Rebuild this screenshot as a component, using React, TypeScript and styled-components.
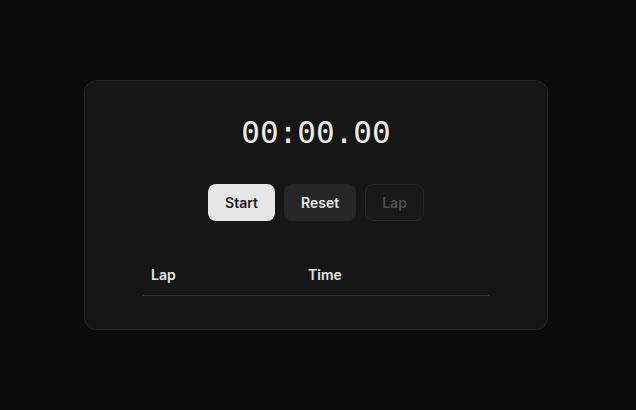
import React from "react";
import styled, { createGlobalStyle } from "styled-components";

const Global = createGlobalStyle`
  html, body { margin: 0; padding: 0; background: #0b0b0b; }
  body { font-family: Inter, "Noto Sans", sans-serif; }
`;

const Page = styled.div`
  box-sizing: border-box;
  min-height: 410px;
  padding-right: 4px;
  display: flex;
  align-items: center;
  justify-content: center;
`;

const Card = styled.div`
  box-sizing: border-box;
  width: 464px;
  height: 250px;
  background: #161616;
  border: 1px solid #242424;
  border-radius: 12px;
  padding: 31px 0 0;
  display: flex;
  flex-direction: column;
  align-items: center;
`;

const Display = styled.div`
  font-family: "DejaVu Sans Mono", monospace;
  font-size: 31px;
  line-height: 40px;
  color: #ececec;
  letter-spacing: 0;
`;

const Controls = styled.div`
  margin-top: 32px;
  display: flex;
  gap: 9px;
`;

const Button = styled.button<{ $variant: "primary" | "secondary" | "disabled" }>`
  box-sizing: border-box;
  height: 37px;
  padding: 0 16px;
  border-radius: 8px;
  font-family: Inter, sans-serif;
  font-weight: 600;
  font-size: 14px;
  cursor: pointer;
  border: 1px solid
    ${(p) => (p.$variant === "disabled" ? "#252525" : "transparent")};
  background: ${(p) =>
    p.$variant === "primary" ? "#e6e6e6" : p.$variant === "secondary" ? "#262626" : "#181818"};
  color: ${(p) =>
    p.$variant === "primary" ? "#1c1c1c" : p.$variant === "secondary" ? "#e8e8e8" : "#4e4e4e"};
`;

const Table = styled.div`
  margin-top: 33px;
  width: 346px;
`;

const HeadRow = styled.div`
  display: grid;
  grid-template-columns: 157px 1fr;
  border-bottom: 1px solid #303030;
`;

const HeadCell = styled.div`
  padding: 11px 8px 10px;
  font-size: 14px;
  line-height: 20px;
  font-weight: 600;
  color: #e6e6e6;
`;

export default function App() {
  return (
    <>
      <Global />
      <Page>
        <Card>
          <Display>00:00.00</Display>
          <Controls>
            <Button $variant="primary">Start</Button>
            <Button $variant="secondary">Reset</Button>
            <Button $variant="disabled" disabled>Lap</Button>
          </Controls>
          <Table>
            <HeadRow>
              <HeadCell>Lap</HeadCell>
              <HeadCell>Time</HeadCell>
            </HeadRow>
          </Table>
        </Card>
      </Page>
    </>
  );
}
